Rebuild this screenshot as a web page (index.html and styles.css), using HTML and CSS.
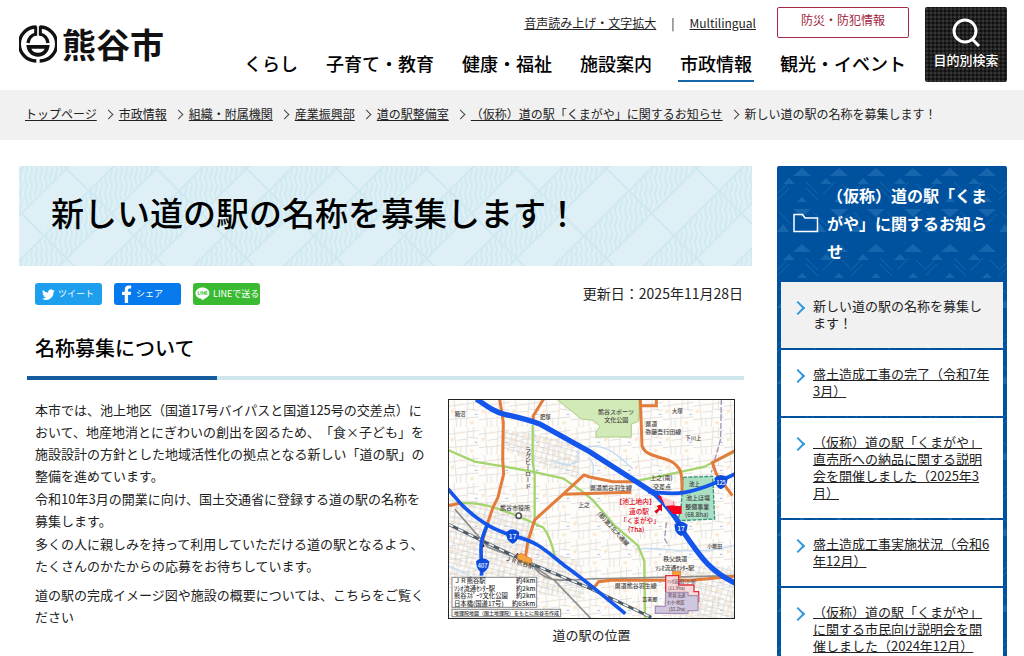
FILE: index.html
```html
<!DOCTYPE html>
<html lang="ja">
<head>
<meta charset="utf-8">
<meta name="viewport" content="width=device-width, initial-scale=1">
<title>新しい道の駅の名称を募集します！：熊谷市</title>
<link rel="stylesheet" href="styles.css">
</head>
<body>
<header class="site-header">
  <a class="logo" href="#">
    <svg class="logo-mark" viewBox="0 0 114 114" aria-hidden="true">
      <g fill="none" stroke="#111" stroke-width="10">
        <path d="M52 6A51 51 0 0 0 52 108M62 6A51 51 0 0 1 62 108"/>
        <path d="M50 4V32M64 4V32" stroke-width="9"/>
        <path d="M27 54C29 38 39 30 50 27M87 54C85 38 75 30 64 27"/>
      </g>
      <path fill="#111" fill-rule="evenodd" d="M22 60H92C90 82 76 95 57 95S24 82 22 60ZM37 71C40 79 47 83 57 83S74 79 77 71Z"/>
    </svg>
    <span class="logo-name">熊谷市</span>
  </a>
  <div class="header-menu">
    <div class="utility">
      <a href="#">音声読み上げ・文字拡大</a>
      <span class="divider">|</span>
      <a class="lang" href="#">Multilingual</a>
      <a class="emergency" href="#">防災・防犯情報</a>
    </div>
    <nav class="global-nav">
      <a href="#">くらし</a>
      <a href="#">子育て・教育</a>
      <a href="#">健康・福祉</a>
      <a href="#">施設案内</a>
      <a class="current" href="#">市政情報</a>
      <a href="#">観光・イベント</a>
    </nav>
  </div>
  <button class="search-button" type="button">
    <svg viewBox="0 0 30 30" aria-hidden="true"><circle cx="14" cy="13" r="11" fill="none" stroke="#fff" stroke-width="3"/><path d="M21 21l7 7" stroke="#fff" stroke-width="3"/></svg>
    <span>目的別検索</span>
  </button>
</header>

<nav class="breadcrumb" aria-label="現在位置">
  <ol>
    <li><a href="#">トップページ</a></li>
    <li><a href="#">市政情報</a></li>
    <li><a href="#">組織・附属機関</a></li>
    <li><a href="#">産業振興部</a></li>
    <li><a href="#">道の駅整備室</a></li>
    <li><a href="#">（仮称）道の駅「くまがや」に関するお知らせ</a></li>
    <li>新しい道の駅の名称を募集します！</li>
  </ol>
</nav>

<div class="page">
  <main class="content">
    <h1>新しい道の駅の名称を募集します！</h1>
    <div class="meta">
      <div class="share">
        <a class="share-link twitter" href="#">
          <svg viewBox="0 0 24 24" aria-hidden="true"><path fill="#fff" d="M23.6 5a9.600 9.600 0 0 1-2.800.8 4.800 4.800 0 0 0 2.100-2.700 9.600 9.600 0 0 1-3 1.200 4.800 4.800 0 0 0-8.300 4.400A13.700 13.700 0 0 1 1.700 3.700a4.800 4.800 0 0 0 1.500 6.400 4.800 4.800 0 0 1-2.200-.6 4.800 4.800 0 0 0 3.900 4.800 4.800 4.800 0 0 1-2.200.1 4.800 4.800 0 0 0 4.500 3.300A9.700 9.700 0 0 1 0 19.700 13.700 13.700 0 0 0 21.200 7.500 9.800 9.800 0 0 0 23.600 5z"/></svg>
          <span>ツイート</span>
        </a>
        <a class="share-link facebook" href="#">
          <svg viewBox="0 0 12 20" aria-hidden="true"><path fill="#fff" d="M3.500 20V11H.5V7.500h3V5C3.500 2 5.300.5 8 .5c1.300 0 2.300.1 2.700.2v3.200H8.900c-1.400 0-1.700.7-1.700 1.700v1.900h3.400L10.100 11H7.200v9z"/></svg>
          <span>シェア</span>
        </a>
        <a class="share-link line" href="#">
          <svg viewBox="0 0 28 26" aria-hidden="true"><path fill="#fff" d="M14 1C6.500 1 1 5.600 1 11.500c0 5.500 4.500 9.500 11 10.300 1.300.3.900 1.400.7 3.200 4-2 14.300-7.200 14.300-13.500C27 5.600 21.500 1 14 1z"/><path d="M6 8v6h3M11 8v6M13.500 14V8l4 6V8M23 8h-3v6h3M20 11h3" fill="none" stroke="#3aba31" stroke-width="1.500"/></svg>
          <span>LINEで送る</span>
        </a>
      </div>
      <p class="updated">更新日：2025年11月28日</p>
    </div>

    <h2>名称募集について</h2>

    <div class="article">
      <div class="article-text">
        <p>本市では、池上地区（国道17号バイパスと国道125号の交差点）に<br>おいて、地産地消とにぎわいの創出を図るため、「食×子ども」を<br>施設設計の方針とした地域活性化の拠点となる新しい「道の駅」の<br>整備を進めています。</p>
        <p>令和10年3月の開業に向け、国土交通省に登録する道の駅の名称を<br>募集します。</p>
        <p>多くの人に親しみを持って利用していただける道の駅となるよう、<br>たくさんのかたからの応募をお待ちしています。</p>
        <p class="note">道の駅の完成イメージ図や施設の概要については、こちらをご覧く<br>ださい</p>
      </div>
      <figure class="map">
        <svg viewBox="0 0 861 660" role="img" aria-label="道の駅の位置を示す地図">
          <defs>
            <pattern id="streets" width="92" height="84" patternUnits="userSpaceOnUse">
              <path d="M0 22L92 10M0 62L92 54M18 0L26 84M60 0L54 84M26 40L58 36M60 30L92 34M38 60V84M76 0V34" fill="none" stroke="#d6d4d2" stroke-width="2"/>
              <path d="M8 34l10-3v9l-9 4zM66 66l12 2-3 9-8-2zM34 12l9 2-2 8z" fill="#fae8d0"/>
              <path d="M80 46h8" stroke="#9cbcf2" stroke-width="3"/>
            </pattern>
            <pattern id="blocks" width="34" height="30" patternUnits="userSpaceOnUse" patternTransform="rotate(15)">
              <path d="M0 8H34M0 22H34M9 0V30M25 0V30" stroke="#d0cecc" stroke-width="2"/>
              <path d="M12 11h10v8H12z" fill="#faebd8"/>
            </pattern>
          </defs>
          <rect width="861" height="660" fill="#fffdfa"/>
          <rect width="861" height="660" fill="url(#streets)"/>
          <path d="M160 90L400 130 390 240 260 190 160 150zM0 300L250 320 260 440 400 490 410 600 0 560zM690 500H861V660H690z" fill="url(#blocks)"/>
          <g fill="none" stroke="#c4dcf3" stroke-width="4">
            <path d="M385 155C410 190 370 210 310 185M400 150C470 120 520 180 555 210M0 500C60 520 100 570 200 560M560 450C650 440 720 475 861 440M420 175C450 200 430 235 425 270"/>
          </g>
          <path d="M325 0H573V52L570 68 550 75V96L550 114H444V100L456 82 436 64 400 60Z" fill="#d2eab7" stroke="#a9cf86" stroke-width="3"/>
          <path d="M705 235L794 232 800 360 690 365 700 318Z" fill="#aadfc4" stroke="#38947a" stroke-width="4" stroke-dasharray="12 4"/>
          <path d="M820 0L818 120 790 220M655 370L650 420 662 440" fill="none" stroke="#a591b7" stroke-width="4" stroke-dasharray="18 6"/>
          <g fill="none" stroke="#a4d46e" stroke-width="7">
            <path d="M0 153L80 188 165 202 253 218 345 238 400 275 436 305 500 380 570 440 589 486 591 660"/>
            <path d="M254 78V190L260 225V375"/>
            <path d="M38 312C100 310 140 325 180 340L230 360 285 385C302 405 312 435 320 470"/>
            <path d="M570 245L690 220 770 203 800 187 861 158"/>
          </g>
          <path d="M20 330L120 445 240 490 320 545 430 660M250 490C280 550 330 548 420 540L861 530" fill="none" stroke="#8c8c8c" stroke-width="5"/>
          <path d="M0 375L100 424 205 474 240 490 426 568 610 655" fill="none" stroke="#4c5966" stroke-width="9"/>
          <path d="M0 375L100 424 205 474 240 490 426 568 610 655" fill="none" stroke="#eef0f2" stroke-width="5" stroke-dasharray="17 17"/>
          <g fill="none" stroke="#e37b3a" stroke-width="9">
            <path d="M155 0L166 70 164 180 167 225 150 295 135 325 118 375 102 430"/>
            <path d="M287 0L256 50 255 72"/>
            <path d="M0 320L38 312M232 475L240 425 260 363 285 340 345 286 408 228 425 234 495 248 560 248"/>
            <path d="M345 286L550 280"/>
            <path d="M577 0L580 85 582 140C590 170 630 171 663 184C706 203 702 235 702 280"/>
            <path d="M577 20H625V2M861 155L793 191 805 225 853 290"/>
            <path d="M436 568L452 548 490 544H730L861 532"/>
          </g>
          <path d="M98 425L106 445M206 465L240 490" stroke="#222" stroke-width="8"/>
          <g fill="none" stroke="#1456ec" stroke-width="11">
            <path d="M85 0C120 24 140 39 170 46C210 55 240 62 275 75L425 158 570 251 620 284C660 322 690 360 710 405C750 460 780 515 861 552" stroke-width="16"/>
            <path d="M600 278C680 287 720 294 861 225"/>
            <path d="M0 270L40 316C100 375 145 395 200 412C270 426 304 465 350 500C410 542 450 578 532 644"/>
            <path d="M120 372C108 402 97 425 99 455L101 530"/>
          </g>
          <path d="M626 288L678 306 679 320 701 322V345H675L664 333Z" fill="#f7001d"/>
          <path d="M640 295L661 291 677 303 677 319 652 321Z" fill="#fff" opacity=".8"/>
          <path d="M642 315L626 321 631 328 619 337 625 344 636 332 642 338Z" fill="#e00018"/>
          <path d="M208 468L221 463 252 482 247 500 210 484Z" fill="#f6a43d" stroke="#e37b3a" stroke-width="3"/>
          <rect x="673" y="517" width="25" height="19" fill="#f4a134" stroke="#e37b3a" stroke-width="2"/>
          <path d="M653 530H692V558H738V578H752V608H726V592H653Z" fill="#f9d8d8" stroke="#df3040" stroke-width="4"/>
          <path d="M653 580H720V590H750V635H720V643H622V622H652Z" fill="#cfc7dd" stroke="#a891b5" stroke-width="4"/>
          <g fill="#0c4bdb">
            <path id="shield" d="M174 400Q194 382 214 400L212 413Q209 427 194 434Q178 427 176 413Z"/>
            <use href="#shield" x="505" y="-23"/>
            <use href="#shield" x="-90" y="87"/>
            <use href="#shield" x="625" y="-163"/>
          </g>
          <circle cx="212" cy="350" r="8" fill="#fff" stroke="#555" stroke-width="5"/>
          <g class="map-badges" text-anchor="middle">
            <text x="194" y="420">17</text><text x="699" y="397">17</text>
            <text x="104" y="507" font-size="17">407</text><text x="819" y="257" font-size="17">125</text>
          </g>
          <g class="map-places">
            <text x="20" y="51" font-size="16">箱沼</text><text x="276" y="60" font-size="16">肥塚</text>
            <text x="450" y="44">熊谷スポーツ</text><text x="469" y="69">文化公園</text>
            <text x="672" y="41" font-size="16">大塚</text>
            <text x="592" y="80">県道</text><text x="592" y="105">弥藤吾行田線</text><text x="712" y="123" font-size="16">下川上</text>
            <text x="391" y="324" font-size="17">上之</text>
            <text x="156" y="333">熊谷市役所</text>
            <text class="vertical" x="240" y="142">ラグビーロード</text>
            <text x="426" y="272">県道熊谷羽生線</text>
            <text x="607" y="244">上之(南)</text><text x="615" y="269">交差点</text>
            <text x="722" y="262" font-size="17">池上</text>
            <text x="714" y="304">池上ほ場</text><text x="712" y="329">整備事業</text><text x="711" y="354">(68.8ha)</text>
            <text transform="translate(447 345) rotate(48)">(都)第2北大通線</text>
            <text x="778" y="447" font-size="15">小敷田</text>
            <text x="646" y="487">秩父鉄道</text><text x="622" y="512">ｿｼｵ流通ｾﾝﾀｰ駅</text>
            <text x="500" y="567">県道熊谷羽生線</text><text x="583" y="606" font-size="15">富茶郷</text>
            <text transform="translate(170 484) rotate(17)">ＪＲ熊谷駅</text>
          </g>
          <g class="map-areas"><text x="658" y="552">ｿｼｵ流通ｾﾝﾀｰ駅</text><text x="660" y="573">(11.9ha)</text><text x="660" y="594">熊谷流通</text><text x="658" y="615">ｾﾝﾀｰ地区</text><text x="662" y="636">(32.2ha)</text></g>
          <g class="map-highlight">
            <text x="503" y="315">【池上地内】</text><text x="543" y="344">道の駅</text><text x="516" y="372">「くまがや」</text><text x="540" y="400">(7ha)</text>
          </g>
          <rect x="12" y="535" width="254" height="90" fill="#fff" stroke="#888" stroke-width="3"/>
          <rect x="12" y="631" width="326" height="22" fill="#fff" stroke="#888" stroke-width="3"/>
          <g class="map-legend">
            <text x="18" y="553">ＪＲ熊谷駅</text><text x="204" y="553">約4km</text>
            <text x="18" y="576">ｿｼｵ流通ｾﾝﾀｰ駅</text><text x="204" y="576">約2km</text>
            <text x="18" y="598">熊谷ｽﾎﾟｰﾂ文化公園</text><text x="204" y="598">約2km</text>
            <text x="18" y="621">日本橋(国道17号)</text><text x="192" y="621">約65km</text>
            <text x="18" y="648" font-size="15">地理院地図（国土地理院）をもとに熊谷市作成</text>
          </g>
          <rect x="1" y="1" width="859" height="658" fill="none" stroke="#222" stroke-width="4"/>
        </svg>
        <figcaption>道の駅の位置</figcaption>
      </figure>
    </div>
  </main>

  <aside class="side-menu">
    <h2 class="side-title">
      <svg viewBox="0 0 26 20" aria-hidden="true"><path d="M1 18.500V1.500H9.500L12 5H24.500V18.500Z" fill="none" stroke="#fff" stroke-width="1.500"/></svg>
      <span>（仮称）道の駅「くまがや」に関するお知らせ</span>
    </h2>
    <ul>
      <li class="current"><span>新しい道の駅の名称を募集します！</span></li>
      <li><a href="#">盛土造成工事の完了（令和7年3月）</a></li>
      <li><a href="#">（仮称）道の駅「くまがや」直売所への納品に関する説明会を開催しました（2025年3月）</a></li>
      <li><a href="#">盛土造成工事実施状況（令和6年12月）</a></li>
      <li><a href="#">（仮称）道の駅「くまがや」に関する市民向け説明会を開催しました（2024年12月）</a></li>
    </ul>
  </aside>
</div>
</body>
</html>
```
FILE: styles.css
```css
* {
  box-sizing: border-box;
}

body {
  margin: 0;
  background: #fff;
  color: #222;
  font-family: "Noto Sans CJK JP", sans-serif;
  font-size: 13px;
  line-height: 22px;
  text-spacing-trim: space-all;
}

a {
  color: inherit;
}

h1, h2, p, ul, ol, figure {
  margin: 0;
  padding: 0;
}

ul, ol {
  list-style: none;
}

.site-header {
  display: flex;
  align-items: flex-start;
  gap: 16px;
  padding: 7px 17px 8px 19px;
}

.logo {
  display: flex;
  align-items: center;
  gap: 5px;
  margin-top: 18px;
  color: #111;
  text-decoration: none;
}

.logo-mark {
  width: 38px;
  height: 38px;
}

.logo-name {
  font-size: 34px;
  font-weight: 700;
  line-height: 38px;
}

.header-menu {
  flex: 1;
  display: flex;
  flex-direction: column;
  align-items: flex-end;
}

.utility {
  display: flex;
  align-items: center;
  font-size: 12px;
}

.divider {
  margin: 0 15px;
}

.emergency {
  width: 132px;
  height: 31px;
  margin-left: 21px;
  border: 1px solid #a52a45;
  border-radius: 2px;
  color: #a01c3c;
  line-height: 24px;
  text-align: center;
  text-decoration: none;
}

.global-nav {
  display: flex;
  gap: 24px;
  margin-top: 12px;
  padding-right: 1px;
  white-space: nowrap;
}

.global-nav a {
  padding: 0 2px 4px;
  border-bottom: 2px solid transparent;
  color: #000;
  font-size: 18px;
  font-weight: 500;
  line-height: 26px;
  text-decoration: none;
}

.global-nav .current {
  border-color: #1565a9;
}

.search-button {
  display: flex;
  flex-direction: column;
  align-items: center;
  gap: 2px;
  width: 82px;
  height: 75px;
  padding: 11px 0 0;
  border: 0;
  border-radius: 2px;
  background: #111 radial-gradient(circle, #363636 1px, transparent 2px) 0 0 / 4px 4px;
  color: #fff;
  font: 500 13px/20px "Noto Sans CJK JP", sans-serif;
}

.search-button svg {
  width: 30px;
  height: 30px;
}

.breadcrumb {
  padding: 13px 25px 15px;
  background: #f1f1f1;
  font-size: 12px;
}

.breadcrumb ol {
  display: flex;
  white-space: nowrap;
}

.breadcrumb li + li::before {
  content: "";
  display: inline-block;
  width: 6px;
  height: 6px;
  margin: 0 7px 1px 8px;
  border: solid #444;
  border-width: 1px 1px 0 0;
  transform: rotate(45deg);
}

.page {
  display: grid;
  grid-template-columns: minmax(0, 1fr) 230px;
  align-items: start;
  gap: 25px;
  padding: 26px 17px 0 19px;
}

h1 {
  padding: 22px 32px 30px;
  background: #deeff5 url("data:image/svg+xml,%3Csvg xmlns='http://www.w3.org/2000/svg' width='90' height='90'%3E%3Cdefs%3E%3Cpattern id='w' width='5' height='16' patternUnits='userSpaceOnUse'%3E%3Cpath d='M2 0Q4 4 2 8T2 16' fill='none' stroke='%23d0eaf2' stroke-width='2'/%3E%3C/pattern%3E%3C/defs%3E%3Cpath d='M5 0L-5 10V50L50 0ZM95 0L5 90H50L95 45Z' fill='url(%23w)'/%3E%3Cpath d='M45 0L90 45M0 45L45 90M5 0L0 5M50 0L0 50M95 0L5 90M95 45L50 90' fill='none' stroke='%23cfe9f1' stroke-width='2'/%3E%3C/svg%3E");
  color: #000;
  font-size: 33px;
  font-weight: 500;
  line-height: 48px;
}

.meta {
  display: flex;
  justify-content: space-between;
  align-items: flex-start;
  padding: 17px 9px 0 16px;
}

.share {
  display: flex;
  gap: 12px;
}

.share-link {
  display: flex;
  align-items: center;
  gap: 3px;
  width: 67px;
  height: 22px;
  border-radius: 3px;
  color: #fff;
  font-size: 9px;
  text-decoration: none;
  white-space: nowrap;
}

.share-link svg {
  flex: none;
}

.twitter {
  padding-left: 7px;
  background: #1d9fee;
}

.twitter svg {
  width: 13px;
  height: 13px;
}

.facebook {
  padding-left: 7px;
  background: #0679ec;
}

.facebook svg {
  width: 12px;
  height: 18px;
}

.line {
  padding-left: 2px;
  background: #3aba31;
}

.line svg {
  width: 15px;
  height: 14px;
}

.updated {
  font-size: 14px;
  line-height: 20px;
}

.content h2 {
  margin: 28px 8px 0;
  padding: 0 8px 13px;
  border-bottom: 4px solid;
  border-image: linear-gradient(to right, #145c9e 190px, #d0e6ee 190px) 1;
  color: #000;
  font-size: 20px;
  font-weight: 500;
  line-height: 30px;
}

.article {
  display: grid;
  grid-template-columns: minmax(0, 1fr) 287px;
  gap: 10px;
  padding: 19px 17px 16px 16px;
}

.article-text p {
  margin-bottom: 1px;
  white-space: nowrap;
}

.article-text .note {
  margin-top: 7px;
}

.map svg {
  display: block;
  width: 100%;
}

.map figcaption {
  margin-top: 5px;
  text-align: center;
}

.map text {
  font-weight: 500;
}

.map-badges {
  fill: #fff;
  font-size: 20px;
}

.map-places {
  fill: #444;
  font-size: 18px;
}

.map-places .vertical {
  writing-mode: vertical-rl;
}

.map-areas {
  fill: #735566;
  font-size: 13px;
}

.map-highlight {
  fill: #e00018;
  font-size: 20px;
}

.map-legend {
  fill: #333;
  font-size: 19px;
}

.side-menu {
  padding: 0 4px 4px;
  border-radius: 2px;
  background: #00529f url("data:image/svg+xml,%3Csvg xmlns='http://www.w3.org/2000/svg' width='74' height='76'%3E%3Cg fill='%231765ac'%3E%3Cpath d='M16 10L25 2L34 10ZM53 10L62 2L71 10ZM6 18L12 12L18 18ZM43 18L49 12L55 18ZM16 43H34L25 51ZM53 43H71L62 51ZM20 36L25 31L30 36ZM57 36L62 31L67 36ZM0 66L6 58L12 66ZM37 66L43 58L49 66Z'/%3E%3Cpath d='M0 28L12 16M0 34L12 22M29 16L41 28M29 22L41 34M46 28L58 16M65 18L74 27M2 46L14 58M36 46L50 60M36 52L46 62M72 48L60 60' fill='none' stroke='%231765ac' stroke-width='1'/%3E%3C/g%3E%3C/svg%3E") 0 0 / 74px 76px;
}

.side-title {
  display: flex;
  align-items: center;
  gap: 8px;
  padding: 15px 8px 17px 12px;
  color: #fff;
  font-size: 16px;
  font-weight: 700;
  line-height: 28px;
}

.side-title svg {
  flex: none;
  width: 26px;
  height: 20px;
}

.side-menu ul {
  display: grid;
  gap: 2px;
}

.side-menu li {
  display: flex;
  gap: 10px;
  padding: 15px 11px 17px 14px;
  background: #fff;
  line-height: 17px;
}

.side-menu li::before {
  content: "";
  flex: none;
  width: 8px;
  height: 8px;
  margin: 6px 0 0 -2px;
  border: solid #3197dc;
  border-width: 2px 2px 0 0;
  transform: rotate(45deg);
}

.side-menu .current {
  background: #f1f1f1;
}
```
